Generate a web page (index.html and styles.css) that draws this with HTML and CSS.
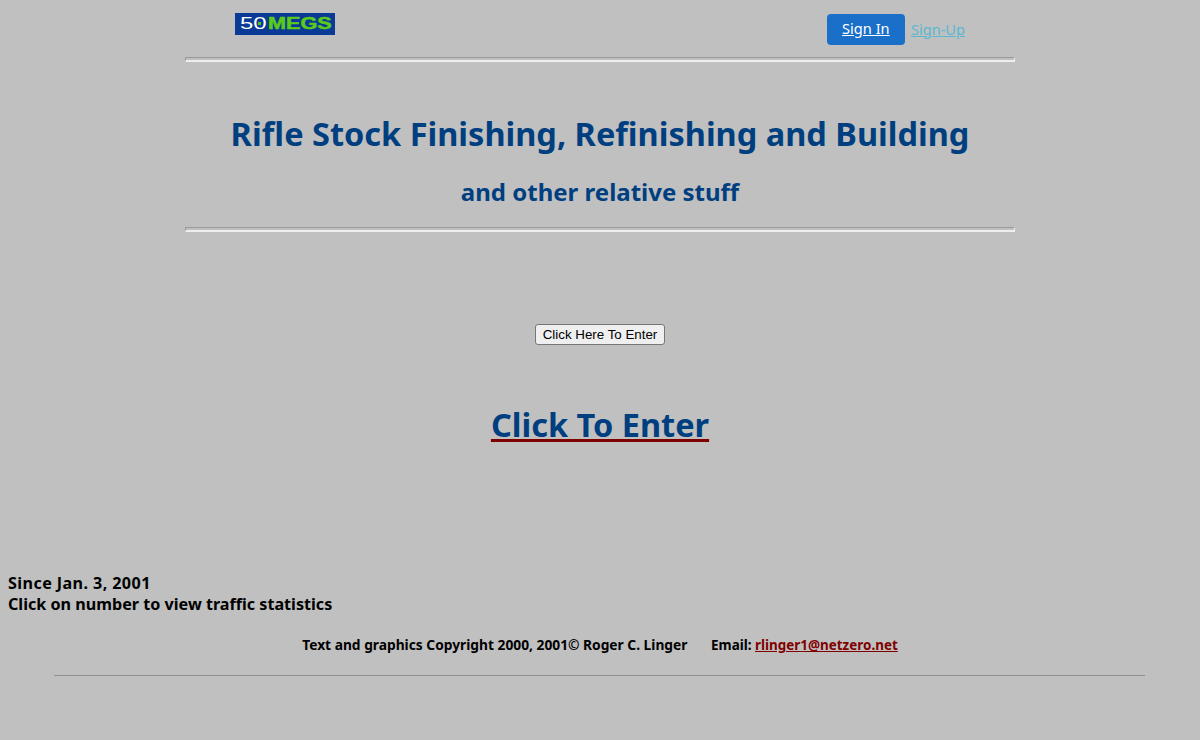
FILE: index.html
```html
<!DOCTYPE html>
<html lang="en">
<head>
<meta charset="utf-8">
<title>Rifle Stock Finishing, Refinishing and Building</title>
<link rel="stylesheet" href="styles.css">
</head>
<body>
<header class="topbar">
  <a class="logo" href="#"><span class="logo-num">50</span><span class="logo-name">MEGS</span></a>
  <nav class="auth">
    <a class="signin" href="#">Sign In</a>
    <a class="signup" href="#">Sign-Up</a>
  </nav>
</header>
<hr class="rule">
<h1 class="title">Rifle Stock Finishing, Refinishing and Building</h1>
<h2 class="subtitle">and other relative stuff</h2>
<hr class="rule">
<div class="enter-form"><button class="enter-btn" type="button">Click Here To Enter</button></div>
<h2 class="enter-link"><a href="#">Click To Enter</a></h2>
<p class="since"><span class="since-date">Since Jan. 3, 2001</span><br>Click on number to view traffic statistics</p>
<p class="copyright">Text and graphics Copyright 2000, 2001© Roger C. Linger <span class="email">Email: <a href="#">rlinger1@netzero.net</a></span></p>
<hr class="footer-rule">
</body>
</html>
```
FILE: styles.css
```css
html, body { height: 100%; }
body {
  margin: 0;
  padding: 0 8px;
  background: #c0c0c0;
  color: #000;
  font-family: "Noto Sans", "Open Sans", sans-serif;
  overflow: hidden;
}
.topbar {
  width: 830px;
  height: 57px;
  margin: 0 auto;
  display: flex;
  justify-content: space-between;
  align-items: flex-start;
  box-sizing: border-box;
  padding: 13px 50px 0;
}
.logo {
  width: 100px;
  height: 22px;
  background: #0b3a94;
  display: flex;
  align-items: center;
  padding-left: 5px;
  box-sizing: border-box;
  font: 700 16px/22px "Liberation Sans", sans-serif;
  text-decoration: none;
  overflow: hidden;
}
.logo-num {
  display: inline-block;
  position: relative;
  width: 28px;
  color: #fff;
  font-weight: 400;
  transform: scaleX(1.5);
  transform-origin: left center;
}
.logo-num::after {
  content: "";
  position: absolute;
  left: 12.4px;
  top: 9px;
  width: 2px;
  height: 3px;
  background: #55c41a;
}
.logo-name {
  display: inline-block;
  color: #5bcb1a;
  font-weight: 700;
  -webkit-text-stroke: 0.5px #5bcb1a;
  transform: scaleX(1.35);
  transform-origin: left center;
}
.auth { display: flex; align-items: center; gap: 6px; margin-top: 1px; }
.signin {
  width: 78px;
  height: 31px;
  background: #1a6fc9;
  border-radius: 4px;
  color: #fff;
  font-size: 14.6px;
  line-height: 29px;
  text-align: center;
}
.signup { color: #5bb8cf; font-size: 14.6px; margin-bottom: 2px; }
.rule {
  width: 830px;
  height: 5px;
  box-sizing: border-box;
  margin: 0 auto;
  border: 1px solid;
  border-color: #9a9a9a #eee #eee #9a9a9a;
  border-bottom-width: 2px;
}
.title {
  margin: 50px 0 0;
  height: 44px;
  text-align: center;
  color: #003f7f;
  font-size: 32.5px;
  line-height: 44px;
  font-weight: 700;
}
.subtitle {
  margin: 19px 0 19px;
  height: 33px;
  text-align: center;
  color: #003f7f;
  font-size: 24px;
  line-height: 34px;
  font-weight: 700;
}
.enter-form { margin-top: 90px; text-align: center; height: 21px; }
.enter-btn {
  width: 130px;
  height: 21px;
  padding: 0;
  font: 13.33px "Liberation Sans", sans-serif;
  background: #efefef;
  color: #000;
  border: 1px solid #767676;
  border-radius: 3px;
}
.enter-link {
  margin: 60px 0 0;
  text-align: center;
  font-size: 32.5px;
  line-height: 44px;
  font-weight: 700;
}
.enter-link a { color: #003f7f; text-decoration-color: #800000; }
.since {
  margin: 126px 0 0;
  font-size: 16.15px;
  line-height: 21px;
  font-weight: 700;
}
.since-date { letter-spacing: 0.4px; }
.copyright {
  margin: 21px 0 0;
  text-align: center;
  font-size: 13.78px;
  line-height: 18px;
  font-weight: 700;
}
.email { margin-left: 20px; font-size: 13.45px; }
.copyright a { color: #800000; }
.footer-rule {
  width: 1091px;
  height: 1px;
  margin: 21px 0 0 46px;
  border: 0;
  background: #8f8f8f;
}
```
